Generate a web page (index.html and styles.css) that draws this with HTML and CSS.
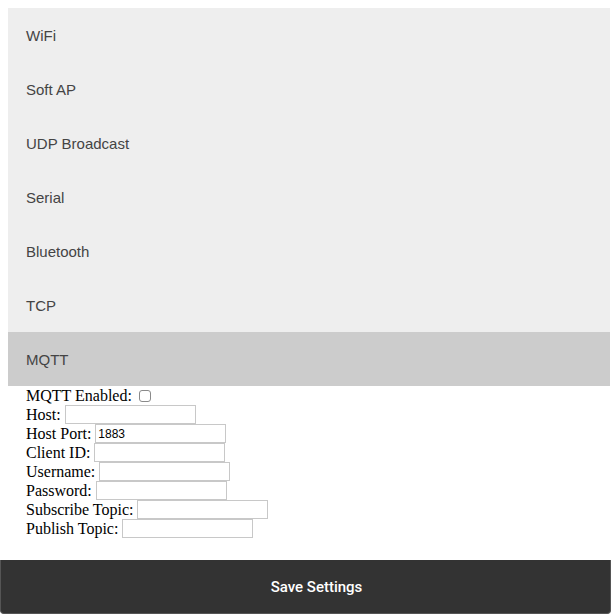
FILE: index.html
```html
<!DOCTYPE html>
<html lang="en">
<head>
    <meta charset="UTF-8">
    <meta name="viewport" content="width=device-width, initial-scale=1.0">
    <title>Settings</title>
    <link rel="stylesheet" href="styles.css">
</head>
<body>
    <button class="accordion">WiFi</button>
    <div class="panel"></div>

    <button class="accordion">Soft AP</button>
    <div class="panel"></div>

    <button class="accordion">UDP Broadcast</button>
    <div class="panel"></div>

    <button class="accordion">Serial</button>
    <div class="panel"></div>

    <button class="accordion">Bluetooth</button>
    <div class="panel"></div>

    <button class="accordion">TCP</button>
    <div class="panel"></div>

    <button class="accordion active">MQTT</button>
    <div class="panel open">
        <div class="row">MQTT Enabled: <input type="checkbox" id="mqttEnabled"></div>
        <div class="row">Host: <input type="text" id="mqttHost"></div>
        <div class="row">Host Port: <input type="text" id="mqttPort" value="1883"></div>
        <div class="row">Client ID: <input type="text" id="mqttClient"></div>
        <div class="row">Username: <input type="text" id="mqttUser"></div>
        <div class="row">Password: <input type="password" id="mqttPass"></div>
        <div class="row">Subscribe Topic: <input type="text" id="mqttSub"></div>
        <div class="row">Publish Topic: <input type="text" id="mqttPub"></div>
    </div>

    <button class="save-btn" onclick="saveSettings()">Save Settings</button>

    <script>
        const acc = document.getElementsByClassName('accordion');

        for (let i = 0; i < acc.length; i++) {
            acc[i].addEventListener('click', function() {
                this.classList.toggle('active');
                this.nextElementSibling.classList.toggle('open');
            });
        }

        function saveSettings() {
            // nothing to send to in the preview
        }
    </script>
</body>
</html>
```

FILE: styles.css
```css
body {
    margin: 8px 1px 8px 8px;
    background: white;
    font-family: "Liberation Serif", "Times New Roman", serif;
    font-size: 16px;
    color: black;
}
.accordion {
    display: block;
    box-sizing: border-box;
    width: 100%;
    height: 54px;
    margin: 0;
    padding: 19px 18px 17px;
    background-color: #eee;
    color: #444;
    cursor: pointer;
    border: none;
    border-radius: 0;
    text-align: left;
    outline: none;
    font-family: "Liberation Sans", Arial, sans-serif;
    font-size: 15px;
    line-height: 18px;
}
.active, .accordion:hover {
    background-color: #ccc;
}
.panel {
    display: none;
    padding: 0 18px 22px;
    background: white;
}
.panel.open {
    display: block;
}
.row {
    height: 19px;
    line-height: 19px;
    white-space: nowrap;
}
input[type="text"], input[type="password"] {
    box-sizing: border-box;
    width: 131px;
    height: 19px;
    margin: 0;
    padding: 1px 2px;
    border: 1px solid #c8c8c8;
    border-radius: 0;
    font-family: "Liberation Sans", Arial, sans-serif;
    font-size: 12px;
    color: black;
    vertical-align: top;
}
input[type="checkbox"] {
    appearance: none;
    box-sizing: border-box;
    width: 12px;
    height: 12px;
    margin: 0 0 0 3px;
    border: 1px solid #8a8a8a;
    border-radius: 3px;
    background: white;
    vertical-align: -1px;
}
.save-btn {
    position: fixed;
    left: 0;
    right: 0;
    bottom: 0;
    height: 54px;
    padding: 18px 18px 18px 40px;
    background-color: #333;
    color: white;
    border: 1px solid #555;
    border-top: none;
    border-radius: 0 0 4px 4px;
    font-family: Roboto, "Liberation Sans", Arial, sans-serif;
    font-size: 15px;
    font-weight: 500;
    cursor: pointer;
}
```
